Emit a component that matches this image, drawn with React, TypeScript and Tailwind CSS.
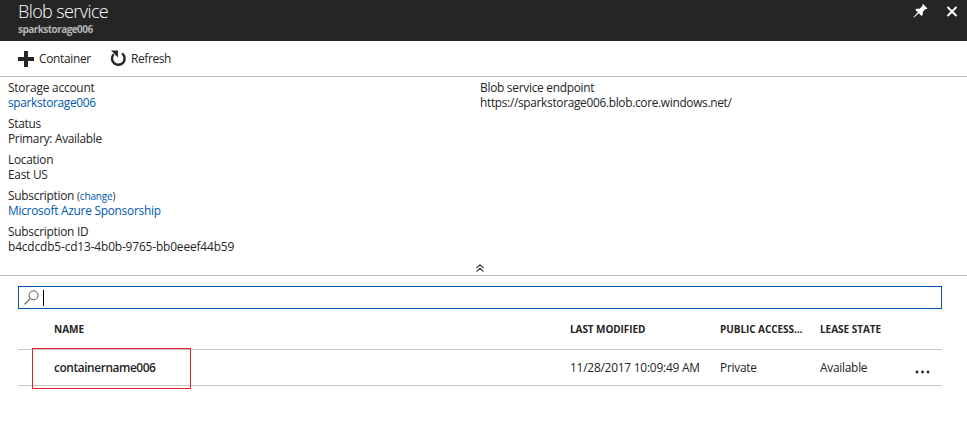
import React from "react";

function Field({ label, children, link }: { label: React.ReactNode; children: React.ReactNode; link?: boolean }) {
  return (
    <div className="mb-1.5">
      <div className="h-[15px]">{label}</div>
      <div className={link ? "h-[15px] text-[#0058ad]" : "h-[15px]"}>{children}</div>
    </div>
  );
}

const columns = "grid grid-cols-[36px_516px_150px_100px_90px_1fr] items-center";

export default function App() {
  return (
    <div className="h-[432px] w-[967px] overflow-hidden bg-white font-['Open_Sans','Noto_Sans',sans-serif] text-[11.9px] leading-[15px] tracking-[-0.26px] text-[#252525]">
      <header className="flex h-[41px] justify-between bg-[#252525] pl-[18px]">
        <div>
          <h1 className="h-[22px] text-[18px] font-light leading-[23px] tracking-[-0.6px] text-white">Blob service</h1>
          <div className="text-[10px] font-bold leading-[14px] tracking-[-0.55px] text-[#b3b3b3]">sparkstorage006</div>
        </div>
        <div className="flex gap-[18px] pr-[9px] pt-1">
          <svg width="15" height="14" viewBox="0 0 15 14" fill="#fff">
            <path d="M10 0 14.5 4.5 13.3 5.3 12.5 5 9.8 8 9.7 11 8.5 12 5.8 9.3 1 13.5.5 13 4.8 8.3 2.3 5.8 3.3 4.8 6.5 4.7 9.5 2 9.2 1Z" />
          </svg>
          <svg className="mt-[1.5px]" width="12" height="11" viewBox="0 0 12 11" stroke="#fff" strokeWidth="1.9">
            <path d="m1.500 1 9 9M10.500 1 1.500 10" />
          </svg>
        </div>
      </header>

      <div className="flex h-9 items-center border-b border-[#b8b8b8] pl-[18px]">
        <svg width="16" height="16" viewBox="0 0 16 16" fill="#252525">
          <path d="M6 0h4v6h6v4h-6v6H6v-6H0V6h6Z" />
        </svg>
        <span className="ml-[5px] w-[52px] whitespace-nowrap tracking-[-0.3px]">Container</span>
        <svg className="ml-[19px]" width="17" height="17" viewBox="0 0 17 17">
          <path d="M3.700 4.200A6.300 6.300 0 1 0 12 3.400" fill="none" stroke="#252525" strokeWidth="2.400" />
          <path d="M1 .6h7v7Z" fill="#252525" />
        </svg>
        <span className="ml-1 tracking-[-0.35px]">Refresh</span>
      </div>

      <section className="h-[199px] border-b border-[#b8b8b8]">
        <div className="flex h-[184px] pl-2 pt-[3px]">
          <div className="w-[472px]">
            <Field label={<span className="tracking-[-0.2px]">Storage account</span>} link><span className="tracking-[-0.34px]">sparkstorage006</span></Field>
            <Field label="Status"><span className="tracking-[-0.3px]">Primary: Available</span></Field>
            <Field label="Location">East US</Field>
            <Field label={<>Subscription <span className="text-[10px] leading-none tracking-[-0.15px]">(<span className="text-[#0058ad]">change</span>)</span></>} link>
              <span className="tracking-[-0.26px]">Microsoft Azure Sponsorship</span>
            </Field>
            <Field label="Subscription ID"><span className="tracking-[-0.14px]">b4cdcdb5-cd13-4b0b-9765-bb0eeef44b59</span></Field>
          </div>
          <Field label={<span className="tracking-[-0.27px]">Blob service endpoint</span>}>
            <span className="tracking-[-0.32px]">https://sparkstorage006.blob.core.windows.net/</span>
          </Field>
        </div>
        <svg className="ml-[476px] mt-[3px]" width="8" height="8" viewBox="0 0 8 8" fill="none" stroke="#444" strokeWidth="1.200">
          <path d="M.5 4 4 .8 7.500 4M.5 7.500 4 4.300 7.500 7.500" />
        </svg>
      </section>

      <main className="px-[18px] pr-[25px] pt-[10px]">
        <div className="flex h-[23px] items-center border border-[#0058ad] pl-[5px]">
          <svg width="15" height="15" viewBox="0 0 15 15" fill="none" stroke="#555">
            <circle cx="9.500" cy="5.300" r="4.500" />
            <path d="M6.200 8.600.5 14.300" strokeWidth="1.200" />
          </svg>
          <span className="ml-1 h-4 w-px bg-black" />
        </div>
        <div className={`${columns} h-[41px] border-b border-[#c8c8c8] text-[10px] font-bold`}>
          <span />
          <span className="tracking-normal">NAME</span>
          <span className="tracking-[-0.08px]">LAST MODIFIED</span>
          <span className="tracking-[-0.06px]">PUBLIC ACCESS...</span>
          <span className="tracking-[-0.03px]">LEASE STATE</span>
        </div>
        <div className={`${columns} relative h-9 border-b border-[#c8c8c8]`}>
          <div className="absolute -top-[2px] left-[14px] h-[41px] w-[159px] border border-[#ed1c24]" />
          <span />
          <span className="font-semibold tracking-[-0.42px]">containername006</span>
          <span className="tracking-[-0.22px]">11/28/2017 10:09:49 AM</span>
          <span>Private</span>
          <span>Available</span>
          <svg className="ml-[5px] mt-[9px]" width="16" height="4" viewBox="0 0 16 4" fill="#252525">
            <circle cx="2" cy="2" r="1.400" />
            <circle cx="7.500" cy="2" r="1.400" />
            <circle cx="13" cy="2" r="1.400" />
          </svg>
        </div>
      </main>
    </div>
  );
}
